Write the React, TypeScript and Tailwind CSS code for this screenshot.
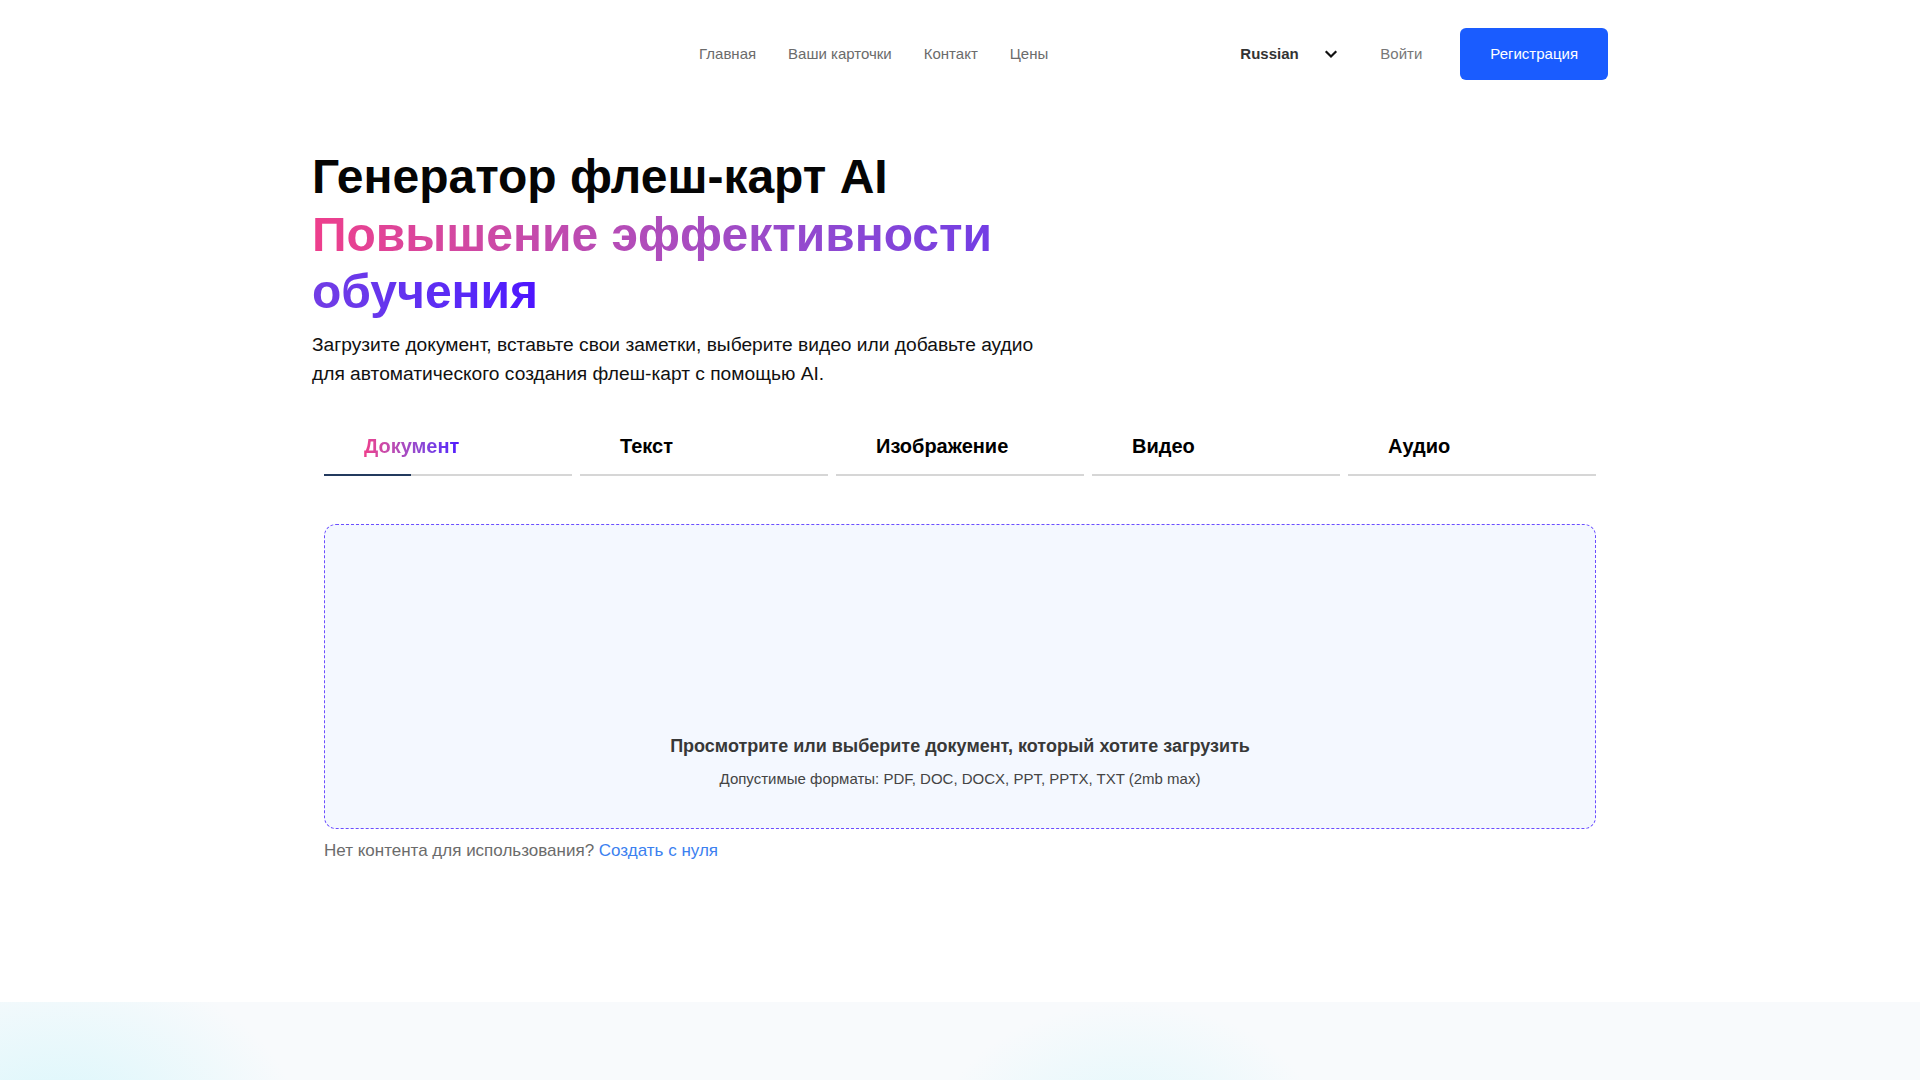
import { FC } from 'react';

const tabs = ['Документ', 'Текст', 'Изображение', 'Видео', 'Аудио'];

const Chevron: FC = () => (
  <svg width="14" height="14" viewBox="0 0 14 14" fill="none">
    <path d="M2.5 5L7 9.5L11.5 5" stroke="#111" strokeWidth="2.2" strokeLinecap="square" />
  </svg>
);

const Header: FC = () => {
  return (
    <header className="mx-auto flex h-[108px] w-[1296px] items-center text-[15px]">
      <div className="w-[387px]" />
      <nav className="flex gap-8 text-[#6b6b6b]">
        <a href="#">Главная</a>
        <a href="#">Ваши карточки</a>
        <a href="#">Контакт</a>
        <a href="#">Цены</a>
      </nav>
      <div className="ml-auto flex items-center">
        <button type="button" className="flex w-[98px] items-center justify-between">
          <span className="font-bold text-[#333]">Russian</span>
          <Chevron />
        </button>
        <a href="#" className="ml-[42px] text-[#777]">
          Войти
        </a>
        <button
          type="button"
          className="ml-[38px] h-[52px] rounded-md bg-[#1a5cff] px-[30px] text-white"
        >
          Регистрация
        </button>
      </div>
    </header>
  );
};

const Tabs: FC = () => {
  return (
    <div className="mt-[30px] grid grid-cols-5 gap-2 px-3">
      {tabs.map((tab, i) => (
        <div key={tab} className="flex flex-col">
          <div className="pb-[14px] pl-[40px] pt-[14px] text-[20px] font-bold leading-[28px]">
            {i === 0 ? (
              <span className="bg-gradient-to-r from-[#ee3e8c] to-[#5212ff] bg-clip-text text-transparent">
                {tab}
              </span>
            ) : (
              <span className="text-black">{tab}</span>
            )}
          </div>
          <div className="h-[2px] bg-[#d6d6d6]">
            {i === 0 && <div className="h-[2px] w-[87px] bg-[#233a5e]" />}
          </div>
        </div>
      ))}
    </div>
  );
};

const Upload: FC = () => {
  return (
    <div className="px-3">
      <div className="mt-12 flex h-[305px] flex-col items-center justify-end rounded-xl border border-dashed border-[#6b4eff] bg-[#f4f8ff] pb-[39px]">
        <p className="text-[18px] font-bold leading-[26px] text-[#383838]">
          Просмотрите или выберите документ, который хотите загрузить
        </p>
        <p className="mt-[10px] text-[15px] leading-[20px] text-[#444]">
          Допустимые форматы: PDF, DOC, DOCX, PPT, PPTX, TXT (2mb max)
        </p>
      </div>
      <p className="mt-[10px] text-[17px] leading-[24px] text-[#6b6b6b]">
        Нет контента для использования?{' '}
        <a href="#" className="text-[#3b7ff0]">
          Создать с нуля
        </a>
      </p>
    </div>
  );
};

export default function App() {
  return (
    <div
      className="min-h-screen overflow-hidden bg-white"
      style={{ fontFamily: '"Liberation Sans", Arial, sans-serif' }}
    >
      <Header />
      <main className="mx-auto w-[1296px]">
        <h1 className="mt-[40px] text-[48px] font-bold leading-[1.2] text-[#050505]">
          Генератор флеш-карт AI
          <br />
          <span className="bg-gradient-to-r from-[#ee3e8c] to-[#4d12ff] bg-clip-text text-transparent">
            Повышение эффективности
            <br />
            обучения
          </span>
        </h1>
        <p className="mt-[9px] w-[780px] text-[19.2px] leading-[29px] text-[#111]">
          Загрузите документ, вставьте свои заметки, выберите видео или добавьте аудио
          <br />
          для автоматического создания флеш-карт с помощью AI.
        </p>
        <Tabs />
        <Upload />
      </main>
      <section className="mt-[139px] h-[300px] bg-[#f8fafc] bg-[image:radial-gradient(ellipse_240px_170px_at_60px_130px,#d8f6fb_0%,rgba(216,246,251,0)_100%),radial-gradient(ellipse_200px_150px_at_1130px_150px,#def7fb_0%,rgba(222,247,251,0)_100%)]" />
    </div>
  );
}
